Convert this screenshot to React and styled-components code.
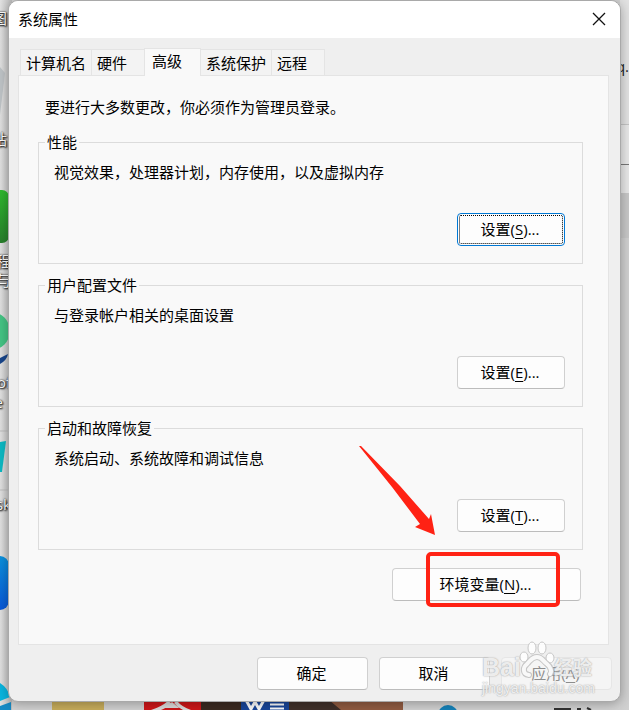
import React from 'react';
import styled, { createGlobalStyle, css, ThemeProvider } from 'styled-components';

const theme = {
  palette: {
    text: '#000',
    window: '#efefef',
    panel: '#f9f9f9',
    line: '#dcdcdc',
    tabLine: '#e4e4e4',
    accent: '#0078d4',
    mark: '#ff2214',
  },
};

const GlobalStyle = createGlobalStyle`
  * {
    box-sizing: border-box;
  }

  body {
    margin: 0;
    overflow: hidden;
    font: 15px/20px "Open Sans", "Noto Sans CJK SC", sans-serif;
    color: #000;
  }

  button {
    font: inherit;
    color: inherit;
  }
`;

const Desktop = styled.main`
  position: relative;
  min-height: 100vh;
  padding: 0 8px 8px;
  overflow: hidden;
  background: #d3d3d3;
`;

const Strip = styled.svg`
  position: absolute;
  display: block;
`;

const LeftStrip = styled(Strip)`
  top: 0;
  left: 0;
`;

const RightStrip = styled(Strip)`
  top: 0;
  right: 0;
`;

const BottomStrip = styled(Strip)`
  bottom: 0;
  left: 0;
`;

const TopStrip = styled.div`
  position: absolute;
  top: 0;
  left: 206px;
  width: 197px;
  height: 4px;
  background: #39323a;
`;

const IconLabel = styled.span`
  position: absolute;
  top: ${({ $top }) => $top}px;
  right: calc(100% - ${({ $edge }) => $edge}px);
  white-space: nowrap;
  color: #fff;
  text-shadow: 0 0 2px #000, 1px 1px 2px #000;
`;

const FileLabel = styled.span`
  position: absolute;
  top: 56px;
  right: 0;
  color: #222;
`;

const Dialog = styled.section`
  position: relative;
  display: flex;
  flex-direction: column;
  min-height: calc(100vh - 8px);
  border: 1px solid #a9a9a9;
  border-radius: 10px;
  background: ${({ theme }) => theme.palette.window};
  box-shadow: 0 2px 12px rgba(0, 0, 0, 0.3);
`;

const TitleBar = styled.header`
  display: flex;
  align-items: center;
  justify-content: space-between;
  height: 37px;
  padding: 0 9px 2px;
  border-radius: 9px 9px 0 0;
  background: #fff;
`;

const Title = styled.h1`
  margin: 0;
  font-size: 15px;
  font-weight: 400;
`;

const CloseButton = styled.button`
  display: flex;
  align-items: center;
  justify-content: center;
  width: 24px;
  height: 24px;
  padding: 0;
  border: 0;
  background: none;
`;

const Tabs = styled.div`
  display: flex;
  align-items: flex-end;
  height: 37px;
  padding: 0 11px;
`;

const Tab = styled.button`
  min-width: 54px;
  height: 26px;
  padding: 0 5px;
  border: 1px solid ${({ theme }) => theme.palette.tabLine};
  border-bottom: 0;
  background: #f3f3f3;
  text-align: left;

  & + & {
    margin-left: -1px;
  }

  ${({ $active, theme }) => $active && css`
    position: relative;
    z-index: 1;
    min-width: 57px;
    height: 28px;
    margin-bottom: -1px;
    padding: 0 7px 4px;
    background: ${theme.palette.panel};
  `}
`;

const Panel = styled.div`
  flex: 1;
  display: flex;
  flex-direction: column;
  margin: 0 11px 0 9px;
  padding: 21px 25px 42px 19px;
  border: 1px solid ${({ theme }) => theme.palette.tabLine};
  background: ${({ theme }) => theme.palette.panel};
`;

const Notice = styled.p`
  margin: 0 0 15px;
  padding-left: 7px;
`;

const Groups = styled.div`
  display: grid;
  gap: 11px;
`;

const Group = styled.fieldset`
  min-width: 0;
  height: 132px;
  margin: 0;
  padding: 0 17px 17px 15px;
  border: 1px solid ${({ theme }) => theme.palette.line};
`;

const Legend = styled.legend`
  margin-left: -9px;
  padding: 0 2px;
  line-height: 20px;
`;

const GroupBody = styled.div`
  display: flex;
  flex-direction: column;
  justify-content: space-between;
  height: 100%;
  padding-top: 10px;
`;

const GroupText = styled.p`
  margin: 0;
`;

const PushButton = styled.button`
  width: ${({ $width }) => $width || 111}px;
  height: 33px;
  padding: 0 2px 2px 0;
  border: 1px solid #d0d0d0;
  border-bottom-color: #bcbcbc;
  border-radius: 4px;
  background: #fdfdfd;

  ${({ $focused, theme }) => $focused && css`
    border-color: ${theme.palette.accent};
    outline: 1px dotted #000;
    outline-offset: -3px;
  `}

  &:disabled {
    border-color: #e6e6e6;
    background: #f5f5f5;
    color: #8d8d8d;
  }
`;

const SettingsButton = styled(PushButton)`
  align-self: flex-end;
`;

const AccessKey = styled.span`
  text-decoration: underline;
  text-underline-offset: 3px;
`;

const Environment = styled.div`
  position: relative;
  align-self: flex-end;
  margin: 18px 2px 0 0;
`;

const Highlight = styled.div`
  position: absolute;
  top: -16px;
  left: 34px;
  width: 134px;
  height: 55px;
  border: 4px solid ${({ theme }) => theme.palette.mark};
  border-radius: 5px;
  pointer-events: none;
`;

const Arrow = styled.svg`
  position: absolute;
  top: -123px;
  left: -34px;
  fill: ${({ theme }) => theme.palette.mark};
  pointer-events: none;
`;

const Footer = styled.footer`
  display: flex;
  justify-content: flex-end;
  gap: 11px;
  padding: 12px 8px 11px;
`;

const Watermark = styled.div`
  position: absolute;
  right: 26px;
  bottom: 6px;
  width: 112px;
  color: rgba(255, 255, 255, 0.8);
  text-shadow: 0 0 1px #aaa, 0 0 2px #bbb;
  white-space: nowrap;
  pointer-events: none;
`;

const WatermarkBrand = styled.div`
  display: flex;
  align-items: flex-end;
  height: 40px;
  font: 700 25px/28px "Liberation Sans", sans-serif;
`;

const WatermarkName = styled.span`
  font: 700 19px/28px "Noto Sans CJK SC", sans-serif;
`;

const WatermarkSite = styled.div`
  font: 14px/14px "Liberation Sans", sans-serif;
`;

const PawIcon = styled.svg`
  flex: none;
  align-self: flex-start;
  margin: 0 -1px 0 -2px;
`;

const tabs = ['计算机名', '硬件', '高级', '系统保护', '远程'];

const groups = [
  { title: '性能', text: '视觉效果，处理器计划，内存使用，以及虚拟内存', accessKey: 'S' },
  { title: '用户配置文件', text: '与登录帐户相关的桌面设置', accessKey: 'E' },
  { title: '启动和故障恢复', text: '系统启动、系统故障和调试信息', accessKey: 'T' },
];

const Wallpaper = () => (
  <>
    <TopStrip />
    <LeftStrip width="12" height="710" aria-hidden="true">
      <defs>
        <linearGradient id="edge">
          <stop offset="0" stopColor="#e2e2e2" />
          <stop offset="1" stopColor="#bdbdbd" />
        </linearGradient>
        <linearGradient id="green" x2="0" y2="1">
          <stop offset="0" stopColor="#2fb92f" />
          <stop offset="1" stopColor="#287f2c" />
        </linearGradient>
        <linearGradient id="blue" x2="0" y2="1">
          <stop offset="0" stopColor="#0b91dc" />
          <stop offset="1" stopColor="#0757d8" />
        </linearGradient>
      </defs>
      <rect width="12" height="710" fill="url(#edge)" />
      <path d="M0 67l5 6-5 42z" fill="#bfc4c7" />
      <rect x="-30" y="190" width="39" height="53" rx="7" fill="url(#green)" />
      <circle cx="-9" cy="331" r="19" fill="#45c484" />
      <path d="M0 358l8-4q-1 6-8 10z" fill="#18468b" />
      <path d="M0 442l6-1-4 31H0z" fill="#0cb9c3" />
      <path d="M0 431h9M0 490h9" stroke="#bdbdbd" />
      <rect x="-30" y="556" width="39" height="54" rx="9" fill="url(#blue)" />
      <path d="M0 683q8 5 10 14l-10 4z" fill="#08b5df" />
      <path d="M0 706l11-4v8H0z" fill="#168bc5" />
    </LeftStrip>
    <IconLabel $top={8} $edge={7}>图</IconLabel>
    <IconLabel $top={129} $edge={7}>站</IconLabel>
    <IconLabel $top={251} $edge={11}>程</IconLabel>
    <IconLabel $top={270} $edge={11}>与</IconLabel>
    <IconLabel $top={372} $edge={11}>of</IconLabel>
    <IconLabel $top={392} $edge={3}>e</IconLabel>
    <IconLabel $top={494} $edge={11}>sk</IconLabel>
    <RightStrip width="9" height="710" aria-hidden="true">
      <rect width="9" height="124" fill="#e2e2e2" />
      <rect y="124" width="9" height="69" fill="#e8e8e8" />
      <path d="M0 124.500h9" stroke="#c4c4c4" />
      <path d="M0 164.500h9" stroke="#777" />
      <rect y="193" width="9" height="45" fill="#c8c8c8" />
      <rect y="238" width="9" height="472" fill="#d0d0d0" />
    </RightStrip>
    <FileLabel>q.</FileLabel>
    <BottomStrip width="629" height="10" aria-hidden="true">
      <rect x="52" width="52" height="10" fill="#c9ae5c" />
      <rect x="144" width="57" height="10" fill="#cf1719" />
      <path d="M151 10q10-3 17-9l3 2q-4 5-10 7zM191 10q-9-3-14-9l-3 2q4 5 9 7zM172 2l7 6h-14z" fill="#ddd" />
      <rect x="201" width="40" height="10" fill="#3b2a21" />
      <rect x="241" width="48" height="10" fill="#19469a" />
      <path d="M246 0l5 9 4-7 4 7 5-9" fill="none" stroke="#fff" strokeWidth="3" />
      <path d="M270 4.500h14M270 8.500h14" stroke="#fff" strokeWidth="2" />
      <rect x="289" width="114" height="10" fill="#925c42" />
      <path d="M289 0h40l12 10h-52z" fill="#40302a" />
      <circle cx="448" cy="15" r="10" fill="#1683ba" />
      <path d="M554 9h17M577 9h4M587 8l4 2" stroke="#333" strokeWidth="2" />
    </BottomStrip>
  </>
);

const Paw = () => (
  <PawIcon width="36" height="38" viewBox="0 0 36 38" stroke="#c6c6c6" aria-hidden="true">
    <g fill="rgba(255,255,255,.85)">
      <ellipse cx="5" cy="16" rx="4" ry="5" />
      <ellipse cx="13" cy="7" rx="4" ry="6" />
      <ellipse cx="23" cy="7" rx="4" ry="6" />
      <ellipse cx="31" cy="17" rx="4" ry="5" />
    </g>
    <g fill="none" strokeLinecap="round">
      <path d="M10 34c-7-1-6-8-2-11 4-4 5-7 10-7s6 4 10 7 5 8 3 10" strokeWidth="6" />
      <path d="M10 34c-7-1-6-8-2-11 4-4 5-7 10-7s6 4 10 7 5 8 3 10" stroke="#f8f8f8" strokeWidth="4" />
    </g>
  </PawIcon>
);

const App = () => (
  <ThemeProvider theme={theme}>
    <GlobalStyle />
    <Desktop>
      <Wallpaper />
      <Dialog role="dialog" aria-labelledby="dialog-title">
        <TitleBar>
          <Title id="dialog-title">系统属性</Title>
          <CloseButton aria-label="关闭">
            <svg width="14" height="14" viewBox="0 0 14 14" stroke="#111" strokeWidth="1.300">
              <path d="M1 1l12 12M13 1L1 13" />
            </svg>
          </CloseButton>
        </TitleBar>
        <Tabs role="tablist">
          {tabs.map(name => (
            <Tab key={name} role="tab" aria-selected={name === '高级'} $active={name === '高级'}>
              {name}
            </Tab>
          ))}
        </Tabs>
        <Panel role="tabpanel">
          <Notice>要进行大多数更改，你必须作为管理员登录。</Notice>
          <Groups>
            {groups.map(({ title, text, accessKey }, i) => (
              <Group key={title}>
                <Legend>{title}</Legend>
                <GroupBody>
                  <GroupText>{text}</GroupText>
                  <SettingsButton $width={108} $focused={i === 0}>
                    设置(<AccessKey>{accessKey}</AccessKey>)...
                  </SettingsButton>
                </GroupBody>
              </Group>
            ))}
          </Groups>
          <Environment>
            <PushButton $width={189}>
              环境变量(<AccessKey>N</AccessKey>)...
            </PushButton>
            <Highlight />
            <Arrow width="78" height="92" viewBox="0 0 78 92" aria-hidden="true">
              <path d="M1 1L3 1 42 41 71 74 73 69 77 90 57 82 62 79 34 42z" />
            </Arrow>
          </Environment>
        </Panel>
        <Footer>
          <PushButton>确定</PushButton>
          <PushButton>取消</PushButton>
          <PushButton disabled>
            应用(<AccessKey>A</AccessKey>)
          </PushButton>
        </Footer>
        <Watermark>
          <WatermarkBrand>
            Bai
            <Paw />
            <WatermarkName>经验</WatermarkName>
          </WatermarkBrand>
          <WatermarkSite>jingyan.baidu.com</WatermarkSite>
        </Watermark>
      </Dialog>
    </Desktop>
  </ThemeProvider>
);

export default App;
